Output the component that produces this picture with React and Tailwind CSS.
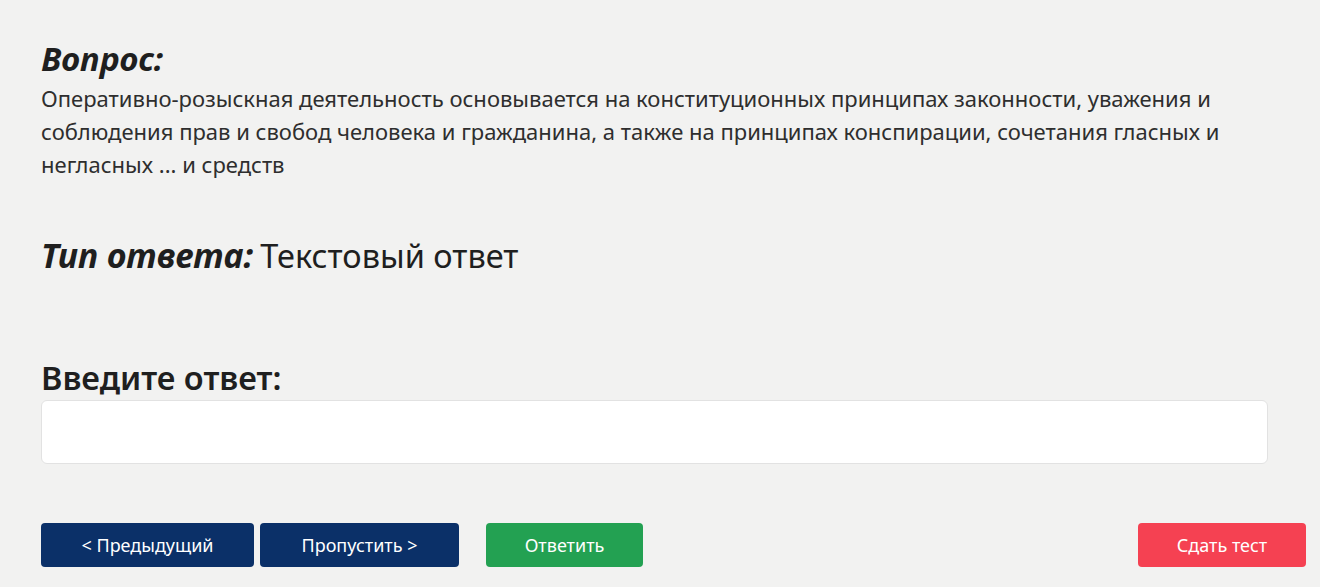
import React, { useState } from 'react';

export default function App() {
  const [answer, setAnswer] = useState('');

  return (
    <div
      className="min-h-screen w-full bg-[#f2f2f1] text-[#222]"
      style={{ fontFamily: '"Noto Sans", "Open Sans", sans-serif' }}
    >
      <div className="pl-[41px] pr-[14px] pt-[36px]">
        {/* Question */}
        <h2 className="text-[33px] leading-[46px] font-bold italic text-[#1f1f1f]">Вопрос:</h2>
        <p className="w-[1227px] text-[22px] leading-[33px] text-[#2e2e2e]">
          Оперативно-розыскная деятельность основывается на конституционных принципах законности, уважения и
          соблюдения прав и свобод человека и гражданина, а также на принципах конспирации, сочетания гласных и
          негласных ... и средств
        </p>

        {/* Answer type */}
        <div className="mt-[51px] flex items-baseline gap-[7px] text-[#1f1f1f] leading-[46px]">
          <span className="text-[34px] font-bold italic">Тип ответа:</span>
          <span className="text-[32.5px] font-normal">Текстовый ответ</span>
        </div>

        {/* Input */}
        <div className="mt-[78px]">
          <label className="block text-[32.5px] leading-[42px] font-semibold text-[#1f1f1f]">Введите ответ:</label>
          <input
            type="text"
            value={answer}
            onChange={e => setAnswer(e.target.value)}
            className="mt-[1px] block h-[64px] w-[1227px] rounded-[6px] border border-[#e2e2e2] bg-white px-4 text-[20px] outline-none"
          />
        </div>

        {/* Buttons */}
        <div className="mt-[59px] flex items-center text-[18px] text-white">
          <button className="h-[44px] w-[213px] rounded-[4px] bg-[#0b3068]">&lt; Предыдущий</button>
          <button className="ml-[6px] h-[44px] w-[199px] rounded-[4px] bg-[#0b3068]">Пропустить &gt;</button>
          <button className="ml-[27px] h-[44px] w-[157px] rounded-[4px] bg-[#23a152]">Ответить</button>
          <button className="ml-auto h-[44px] w-[168px] rounded-[4px] bg-[#f54152]">Сдать тест</button>
        </div>
      </div>
    </div>
  );
}
